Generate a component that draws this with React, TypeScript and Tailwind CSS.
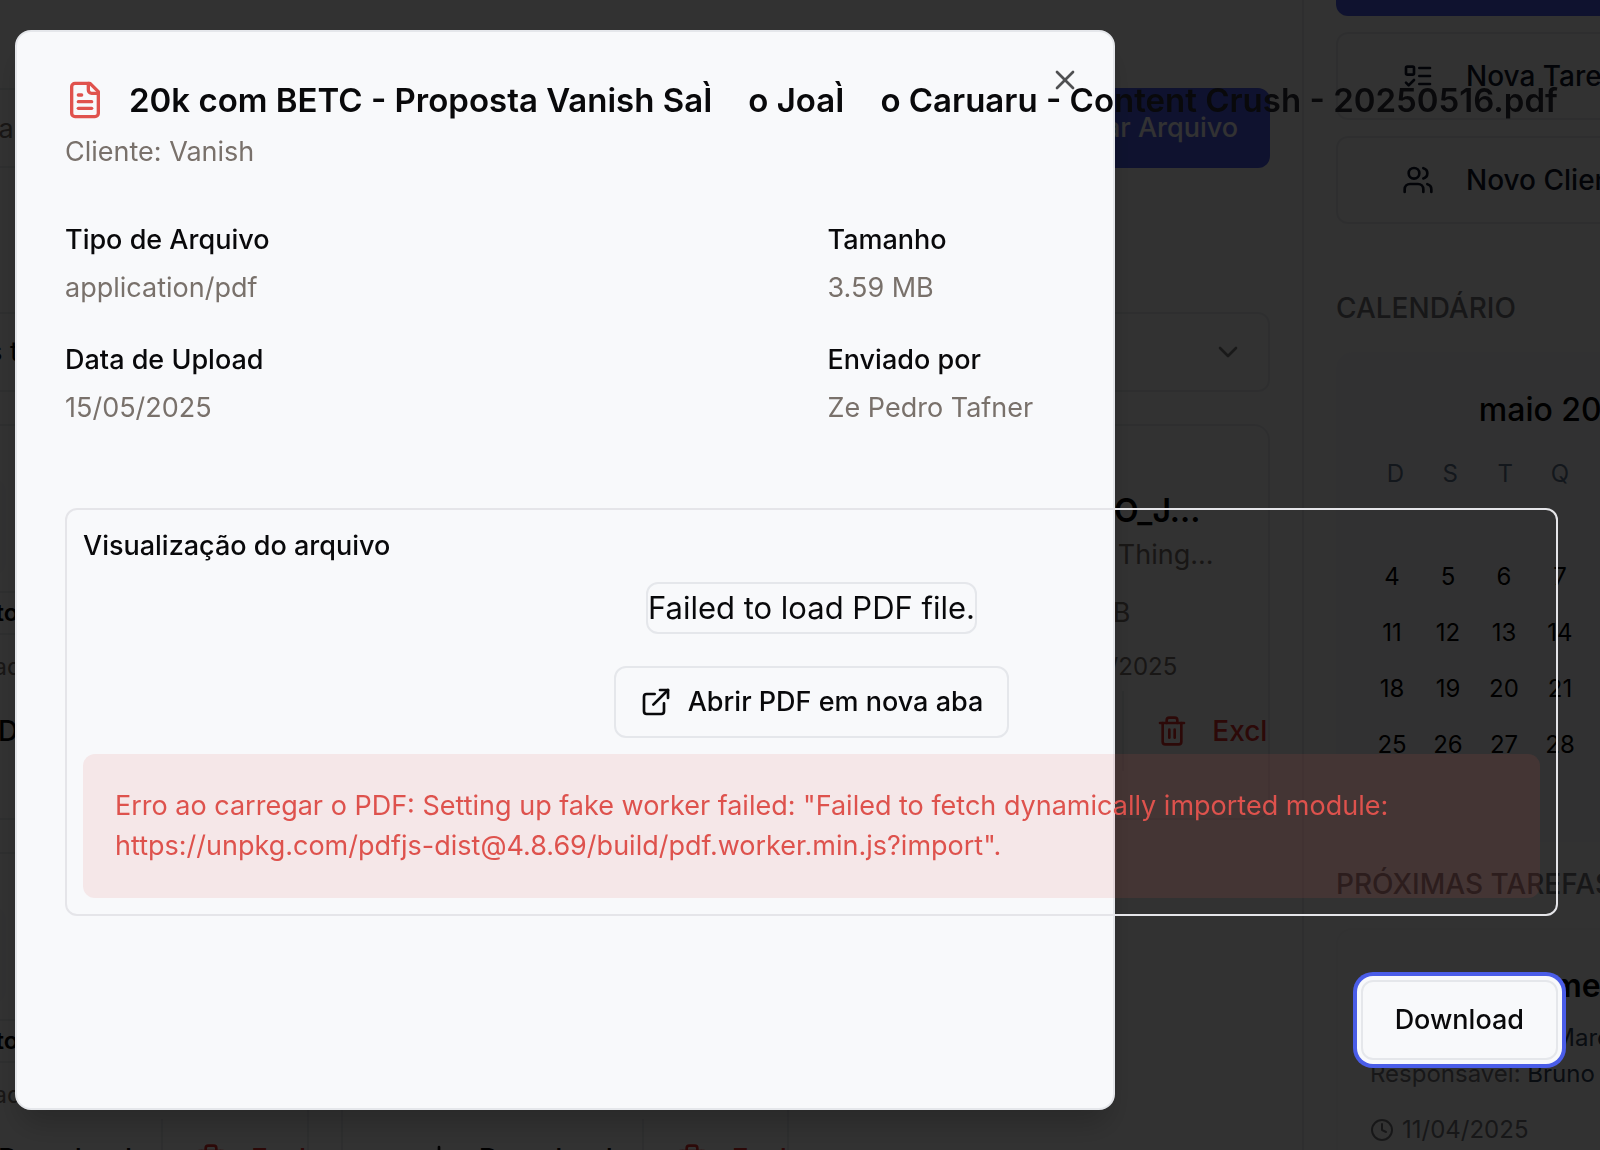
import type { ReactNode } from "react";
import { CalendarDays, ChevronDown, Clock, Download, ExternalLink, Trash2, Users, X } from "lucide-react";

type FileEntry = {
  title: string;
  client: string;
  tag: string;
  size: string;
  date: string;
};

const files: FileEntry[] = [
  { title: "BRIEFING_A...", client: "Cliente: Vanish", tag: "Projeto", size: "1.20 MB", date: "15/05/2025" },
  { title: "PROPOSTA_C...", client: "Cliente: Vanish", tag: "Contrato", size: "3.59 MB", date: "15/05/2025" },
  { title: "ROTEIRO_J...", client: "Clientes: Thing...", tag: "Contrato", size: "2.41 MB", date: "14/05/2025" },
  { title: "CRONOGRA...", client: "Cliente: Vanish", tag: "Projeto", size: "0.84 MB", date: "12/05/2025" },
  { title: "ORCAMENT...", client: "Cliente: Vanish", tag: "Contrato", size: "1.77 MB", date: "12/05/2025" },
];

const weekdays = ["D", "S", "T", "Q", "Q", "S", "S"];
const leadingBlanks = [0, 1, 2, 3];
const monthDays = Array.from({ length: 31 }, (_, i) => i + 1);

function FileTextIcon({ className }: { className: string }) {
  return (
    <svg
      viewBox="0 0 24 24"
      fill="none"
      stroke="currentColor"
      strokeWidth="2"
      strokeLinecap="round"
      strokeLinejoin="round"
      aria-hidden="true"
      className={className}
    >
      <path d="M15 2H6a2 2 0 0 0-2 2v16a2 2 0 0 0 2 2h12a2 2 0 0 0 2-2V7Z" />
      <path d="M14 2v4a2 2 0 0 0 2 2h4" />
      <path d="M10 9H8" />
      <path d="M16 13H8" />
      <path d="M16 17H8" />
    </svg>
  );
}

function ListTodoIcon({ className }: { className: string }) {
  return (
    <svg
      viewBox="0 0 24 24"
      fill="none"
      stroke="currentColor"
      strokeWidth="2"
      strokeLinecap="round"
      strokeLinejoin="round"
      aria-hidden="true"
      className={className}
    >
      <rect x="3" y="5" width="6" height="6" rx="1" />
      <path d="m3 17 2 2 4-4" />
      <path d="M13 6h8" />
      <path d="M13 12h8" />
      <path d="M13 18h8" />
    </svg>
  );
}

function FileCard({ file }: { file: FileEntry }) {
  return (
    <article className="flex h-[396px] flex-col overflow-hidden rounded-2xl border-2 border-gray-200 text-black">
      <div className="flex gap-8 px-12 pt-[53px]">
        <div className="flex size-24 shrink-0 items-center justify-center rounded-xl bg-gray-100">
          <FileTextIcon className="size-12 text-[#dc4f4a]" />
        </div>
        <div className="whitespace-nowrap pt-2">
          <h3 className="text-[32px] font-semibold leading-[48px]">{file.title}</h3>
          <p className="text-[27px] leading-10 text-stone-500">{file.client}</p>
        </div>
      </div>
      <div className="mt-4 flex items-center gap-1 px-12">
        <span className="rounded-full border-2 border-gray-200 px-6 text-2xl leading-10 font-semibold">{file.tag}</span>
        <span className="whitespace-nowrap text-[27px] leading-10 text-stone-500">{file.size}</span>
      </div>
      <p className="mt-4 flex items-center gap-1 px-12 text-2xl text-stone-500">
        <CalendarDays className="size-8" />
        Enviado em {file.date}
      </p>
      <div className="mt-2 flex h-20 shrink-0 text-[28px] font-medium">
        <button type="button" className="flex w-[299px] shrink-0 items-center gap-6 pl-20">
          <Download className="size-8" />
          Download
        </button>
        <button
          type="button"
          className="flex shrink-0 items-center gap-6 border-l-2 border-gray-200 px-8 text-[#dc2f2a]"
        >
          <Trash2 className="size-8" />
          Excluir
        </button>
      </div>
    </article>
  );
}

function FilesPage() {
  return (
    <main className="-ml-[172px] min-w-0 flex-1 px-8 pt-[88px]">
      <div className="flex justify-between">
        <input
          type="search"
          aria-label="Buscar arquivos"
          placeholder="Buscar arquivos..."
          className="h-20 w-[640px] rounded-xl border-2 border-gray-200 px-10 text-[27px] placeholder:text-stone-500"
        />
        <button type="button" className="h-20 rounded-xl bg-[#4a5de8] px-8 text-[27px] font-medium text-slate-50">
          Enviar Arquivo
        </button>
      </div>
      <div className="mt-36 grid grid-cols-2 gap-8">
        {["Todos os tipos", "Todos os clientes"].map((label) => (
          <div key={label} className="relative">
            <select
              aria-label={label}
              className="h-20 w-full appearance-none rounded-xl border-2 border-gray-200 px-6 text-[27px] text-black"
            >
              <option>{label}</option>
            </select>
            <ChevronDown className="pointer-events-none absolute top-6 right-[26px] size-8 text-black opacity-50" />
          </div>
        ))}
      </div>
      <div className="mt-8 grid grid-cols-3 gap-8">
        {files.map((file) => (
          <FileCard key={file.title} file={file} />
        ))}
      </div>
    </main>
  );
}

function QuickAction({ icon, children }: { icon: ReactNode; children: ReactNode }) {
  return (
    <button
      type="button"
      className="flex h-[88px] items-center gap-8 rounded-xl border-2 border-gray-200 pl-16 text-[28px] font-medium text-slate-900"
    >
      {icon}
      {children}
    </button>
  );
}

function Sidebar() {
  return (
    <aside className="w-[298px] shrink-0 border-l-2 border-gray-200 pl-8">
      <div className="w-[448px]">
        <div className="flex flex-col gap-4">
          <button type="button" aria-label="Novo Projeto" className="h-4 rounded-b-xl bg-[#4a5de8]" />
          <QuickAction icon={<ListTodoIcon className="size-8" />}>Nova Tarefa</QuickAction>
          <QuickAction icon={<Users className="size-8" />}>Novo Cliente</QuickAction>
        </div>
        <h2 className="mt-16 text-[28px] leading-10 font-medium text-[#76767a]">CALENDÁRIO</h2>
        <section className="mt-6 h-[490px] rounded-2xl bg-[#f6f6f7] pt-8 text-center text-black">
          <h3 className="text-[32px] leading-[52px] font-medium">maio 2025</h3>
          <div className="mx-8 mt-5 grid grid-cols-7 text-2xl leading-9 text-slate-500">
            {weekdays.map((day, i) => (
              <span key={i}>{day}</span>
            ))}
          </div>
          <div className="mx-7 mt-px grid grid-cols-7 text-2xl leading-[56px]">
            {leadingBlanks.map((i) => (
              <span key={i} />
            ))}
            {monthDays.map((day) => (
              <span key={day}>{day}</span>
            ))}
          </div>
        </section>
        <h2 className="mt-[22px] text-[28px] leading-10 font-medium text-[#76767a]">PRÓXIMAS TAREFAS</h2>
        <section className="mt-6 rounded-2xl border-2 border-[#f4f4f5] px-8 pt-8 pb-8 text-2xl leading-8 text-[#76767a]">
          <h3 className="text-[32px] leading-[48px] font-semibold text-black">Fechar orçamento</h3>
          <p className="mt-3">
            Cliente: <span className="text-slate-700">Nossas Marcas</span>
          </p>
          <p className="mt-1">
            Responsável: <span className="text-slate-700">Bruno Lima</span>
          </p>
          <p className="mt-6 flex items-center gap-2">
            <Clock className="size-6" />
            11/04/2025
          </p>
        </section>
      </div>
    </aside>
  );
}

function Detail({ label, value }: { label: string; value: string }) {
  return (
    <div className="flex flex-col gap-2">
      <dt className="font-medium">{label}</dt>
      <dd className="text-stone-500">{value}</dd>
    </div>
  );
}

function FileDialog() {
  return (
    <div
      role="dialog"
      aria-modal="true"
      aria-labelledby="file-title"
      className="relative mt-[30px] ml-[15px] grid w-[1100px] grid-cols-[1493px] rounded-2xl border-2 border-gray-200 bg-[#f8f9fb] p-12 text-[27px] leading-10 text-zinc-950 shadow-[0_20px_30px_-6px_rgba(0,0,0,0.2)]"
    >
      <button type="button" aria-label="Fechar" className="absolute top-8 right-8 opacity-70">
        <X className="size-8" />
      </button>
      <header className="relative">
        <h1 id="file-title" className="flex items-center gap-6 text-[33px] leading-10 font-semibold whitespace-nowrap">
          <FileTextIcon className="size-10 shrink-0 text-[#e0524d]" />
          <span>
            20k com BETC - Proposta Vanish SaÌ<span className="ml-9">o JoaÌ</span>
            <span className="ml-9">o Caruaru - Content Crush - 20250516.pdf</span>
          </span>
        </h1>
        <p className="mt-3 text-stone-500">Cliente: Vanish</p>
      </header>

      <dl className="mt-12 grid grid-cols-2 gap-8">
        <Detail label="Tipo de Arquivo" value="application/pdf" />
        <Detail label="Tamanho" value="3.59 MB" />
        <Detail label="Data de Upload" value="15/05/2025" />
        <Detail label="Enviado por" value="Ze Pedro Tafner" />
      </dl>

      <section className="mt-20 rounded-xl border-2 border-[#e5e5e9] p-4">
        <h2 className="font-medium">Visualização do arquivo</h2>
        <div className="mt-4 flex flex-col items-center">
          <div className="rounded-xl border-2 border-gray-200 text-[31px] leading-[48px]">Failed to load PDF file.</div>
          <button
            type="button"
            className="mt-8 flex h-[72px] items-center gap-4 rounded-xl border-2 border-gray-200 px-6 font-medium"
          >
            <ExternalLink className="size-8" />
            Abrir PDF em nova aba
          </button>
        </div>
        <p role="alert" className="mt-4 rounded-xl bg-[#de4c48]/10 p-8 text-[#de524d]">
          Erro ao carregar o PDF: Setting up fake worker failed: "Failed to fetch dynamically imported module:
          https://unpkg.com/pdfjs-dist@4.8.69/build/pdf.worker.min.js?import".
        </p>
      </section>

      <footer className="mt-16 flex justify-end">
        <button
          type="button"
          className="h-20 rounded-xl border-2 border-gray-200 bg-[#f8f9fb] px-8 font-medium ring-4 ring-[#4a5de8] ring-offset-4 ring-offset-[#f8f9fb]"
        >
          Download
        </button>
      </footer>
    </div>
  );
}

export default function App() {
  return (
    <div className="relative h-screen overflow-hidden bg-[#fafafa] font-['Inter',sans-serif]">
      <div className="flex h-full overflow-hidden">
        <FilesPage />
        <Sidebar />
      </div>
      <div className="fixed inset-0 flex items-start overflow-hidden bg-black/80">
        <FileDialog />
      </div>
    </div>
  );
}
